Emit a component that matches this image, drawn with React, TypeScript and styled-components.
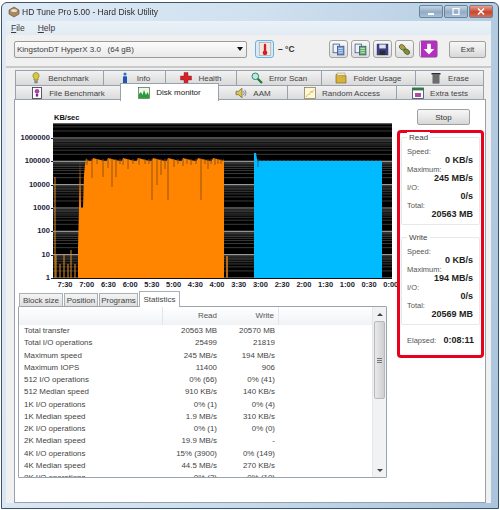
import styled, { createGlobalStyle } from "styled-components";
import type { ReactNode } from "react";

const GlobalStyle = createGlobalStyle`
  html, body { margin: 0; padding: 0; background: #fff; }
  body { font-family: "Liberation Sans", Arial, sans-serif; font-size: 8px; color: #3a3a3a; }
`;

/* ---------- window frame ---------- */
const Page = styled.div`
  width: 500px;
  height: 510px;
  overflow: hidden;
  padding-top: 2px;
  box-sizing: border-box;
`;

const Frame = styled.div`
  width: 498px;
  height: 507px;
  margin-left: 1px;
  box-sizing: border-box;
  border: 1px solid #3f5468;
  border-radius: 6px 6px 0 0;
  background: linear-gradient(100deg, #dfeaf5 0%, #cfe0ef 45%, #a9c4dc 100%);
  padding: 0 7px 5px 4px;
  display: flex;
  flex-direction: column;
  filter: blur(0.3px);
`;

const TitleBar = styled.div`
  height: 18px;
  flex: none;
  display: flex;
  align-items: center;
  gap: 2px;
  padding-left: 2px;
  font-size: 8.5px;
  color: #2c2c2c;
`;

const WinButtons = styled.div`
  margin-left: auto;
  display: flex;
  gap: 1px;
  margin-top: -1px;
  margin-right: -2px;
`;

const WinButton = styled.div<{ $close?: boolean }>`
  width: 22px;
  height: 11px;
  border: 1px solid #6d8297;
  border-radius: 2px;
  display: flex;
  align-items: center;
  justify-content: center;
  color: #fff;
  background: ${(p) =>
    p.$close
      ? "linear-gradient(#e8a08c, #c9452e 55%, #d2705a)"
      : "linear-gradient(#c4d6e6, #91abc4 55%, #a9c1d7)"};
`;

const Client = styled.div`
  flex: 1;
  background: #f0f0f0;
  display: flex;
  flex-direction: column;
  min-height: 0;
`;

const MenuBar = styled.div`
  height: 14px;
  flex: none;
  display: flex;
  gap: 13px;
  padding-left: 5px;
  align-items: center;
  font-size: 8.5px;
  background: linear-gradient(#eaf1f8, #e2ebf3);
  & u { text-decoration: underline; }
`;

const Toolbar = styled.div`
  height: 33px;
  flex: none;
  box-sizing: border-box;
  display: flex;
  align-items: center;
  padding: 0 5px 3px 8px;
  border-bottom: 2px solid #c9c9c9;
  background: #f0f0f0;
`;

const DriveSelect = styled.div`
  width: 233px;
  height: 17px;
  box-sizing: border-box;
  border: 1px solid #9a9a9a;
  border-radius: 2px;
  background: linear-gradient(#fbfbfb, #e9e9e9);
  display: flex;
  align-items: center;
  justify-content: space-between;
  padding: 0 3px 0 2px;
  font-size: 8px;
  margin-right: 8px;
`;

const Caret = styled.span`
  width: 0;
  height: 0;
  border-left: 3px solid transparent;
  border-right: 3px solid transparent;
  border-top: 4px solid #111;
`;

const ToolButton = styled.div<{ $hot?: boolean; $mr?: number }>`
  width: 19px;
  height: 18px;
  box-sizing: border-box;
  border: 1px solid ${(p) => (p.$hot ? "#6fb0d8" : "#a3a3a3")};
  border-radius: 3px;
  background: ${(p) => (p.$hot ? "#d6ecf8" : "linear-gradient(#f8f8f8, #dedede)")};
  display: flex;
  align-items: center;
  justify-content: center;
  margin-right: ${(p) => p.$mr ?? 3}px;
`;

const Temp = styled.span`
  font-size: 8.5px;
  font-weight: bold;
  color: #333;
  margin-left: 4px;
  width: 51px;
  flex: none;
`;

const PushButton = styled.div<{ $w: number }>`
  width: ${(p) => p.$w}px;
  height: 17px;
  box-sizing: border-box;
  border: 1px solid #a0a0a0;
  border-radius: 2px;
  background: linear-gradient(#f6f6f6, #e9e9e9 50%, #d7d7d7);
  display: flex;
  align-items: center;
  justify-content: center;
  font-size: 8px;
  color: #333;
  flex: none;
`;

const StopButton = styled(PushButton)`
  height: 16px;
  margin-left: 6px;
`;

/* ---------- tabs ---------- */
const TabArea = styled.div`
  flex: 1;
  padding: 2px 0 0 8px;
  display: flex;
  flex-direction: column;
`;

const TabRow = styled.div`
  height: 15px;
  display: flex;
  padding-left: 1px;
  flex: none;
`;

const Tab = styled.div<{ $w: number; $active?: boolean }>`
  width: ${(p) => p.$w}px;
  flex: none;
  box-sizing: border-box;
  border: 1px solid #98a2ac;
  border-bottom: none;
  margin-right: -1px;
  display: flex;
  align-items: center;
  justify-content: center;
  gap: 6px;
  font-size: 8px;
  color: #444;
  background: linear-gradient(#f2f2f2, #d9d9d9);
  ${(p) =>
    p.$active &&
    `
    background: #fff;
    height: 18px;
    margin-top: -2px;
    position: relative;
    z-index: 2;
    color: #222;
  `}
`;

const Panel = styled.div`
  width: 472px;
  height: 404px;
  margin-top: -1px;
  box-sizing: border-box;
  border: 1px solid #98a2ac;
  background: #fff;
  padding: 9px 0 0 3px;
  display: grid;
  grid-template-columns: 374px 87px;
  column-gap: 5px;
  align-content: start;
`;

const LeftCol = styled.div`
  display: flex;
  flex-direction: column;
  padding-top: 4px;
`;

const ChartTitle = styled.div`
  height: 10px;
  margin-left: 36px;
  font-size: 7.5px;
  font-weight: bold;
  line-height: 10px;
  color: #111;
`;

const ChartGrid = styled.div`
  display: grid;
  grid-template-columns: 35px 339px;
  grid-template-rows: 156px 12px;
`;

const YAxis = styled.div`
  grid-row: 1 / 3;
  height: 160px;
  padding-top: 10px;
  box-sizing: border-box;
  display: flex;
  flex-direction: column;
  justify-content: space-between;
`;

const YLabel = styled.div`
  height: 10px;
  line-height: 10px;
  font-size: 7.6px;
  font-weight: bold;
  color: #1c1c3a;
  text-align: right;
  padding-right: 3px;
  position: relative;
  &::after {
    content: "";
    position: absolute;
    right: 0;
    top: 5px;
    width: 2px;
    height: 1px;
    background: #222;
  }
`;

const XAxis = styled.div`
  display: flex;
  justify-content: space-between;
  margin: 1px -9px 0 2px;
`;

const XLabel = styled.div`
  width: 20px;
  text-align: center;
  font-size: 7.5px;
  font-weight: bold;
  line-height: 10px;
  color: #1c1c2c;
`;

/* ---------- statistics list ---------- */
const SubTabs = styled.div`
  height: 15px;
  padding-left: 1px;
  display: flex;
  align-items: flex-end;
`;

const SubTab = styled.div<{ $w: number; $active?: boolean }>`
  width: ${(p) => p.$w}px;
  height: ${(p) => (p.$active ? 16 : 13)}px;
  box-sizing: border-box;
  border: 1px solid #a8b0b8;
  border-bottom: none;
  margin-right: ${(p) => (p.$active ? 0 : 1)}px;
  margin-bottom: ${(p) => (p.$active ? -1 : 0)}px;
  display: flex;
  align-items: center;
  justify-content: center;
  font-size: 8px;
  color: #444;
  background: ${(p) => (p.$active ? "#fff" : "linear-gradient(#f4f4f4, #dfdfdf)")};
  position: relative;
  z-index: 1;
  white-space: nowrap;
`;

const ListBox = styled.div`
  width: 369px;
  height: 172px;
  box-sizing: border-box;
  border: 1px solid #9aa4ad;
  border-radius: 1px;
  display: flex;
  overflow: hidden;
`;

const ListBody = styled.div`
  flex: 1;
  min-width: 0;
`;

const ListHead = styled.div`
  height: 18px;
  display: grid;
  grid-template-columns: 144px 54px 62px 1fr;
  background: linear-gradient(#fff, #f0f2f5);
  font-size: 8px;
  line-height: 18px;
  color: #555;
`;

const HeadCell = styled.div<{ $line?: boolean }>`
  text-align: right;
  border-right: ${(p) => (p.$line ? "1px solid #e3e6e9" : "none")};
  padding-right: ${(p) => (p.$line ? 4 : 0)}px;
`;

const HeadSpacer = styled.div`
  border-right: 1px solid #e3e6e9;
`;

const ListRow = styled.div`
  height: 12.25px;
  display: grid;
  grid-template-columns: 198px 58px;
  font-size: 7.9px;
  line-height: 12.25px;
  color: #444;
  white-space: nowrap;
`;

const RowName = styled.div`
  position: relative;
  padding-left: 5px;
  display: flex;
  justify-content: space-between;
`;

const RowValue = styled.div`
  text-align: right;
`;

const ScrollBar = styled.div`
  width: 13px;
  flex: none;
  background: #f1f2f3;
  border-left: 1px solid #e4e6e8;
  display: flex;
  flex-direction: column;
  align-items: center;
`;

const ScrollArrow = styled.div<{ $up?: boolean }>`
  height: 14px;
  flex: none;
  display: flex;
  align-items: center;
  justify-content: center;
  &::before {
    content: "";
    border-left: 3px solid transparent;
    border-right: 3px solid transparent;
    ${(p) => (p.$up ? "border-bottom: 3px solid #444;" : "border-top: 3px solid #444;")}
  }
`;

const ScrollThumb = styled.div`
  width: 11px;
  height: 78px;
  box-sizing: border-box;
  border: 1px solid #b5b9bd;
  border-radius: 2px;
  background: linear-gradient(90deg, #e9e9e9, #cfcfcf);
  display: flex;
  align-items: center;
  justify-content: center;
  flex: none;
`;

const Grip = styled.div`
  width: 5px;
  height: 5px;
  background: repeating-linear-gradient(#777 0 1px, transparent 1px 2px);
`;

const ScrollGap = styled.div`
  flex: 1;
`;

/* ---------- right column ---------- */
const RightCol = styled.div`
  display: flex;
  flex-direction: column;
  align-items: center;
`;

const RedBox = styled.div`
  width: 87px;
  height: 228px;
  margin-top: 5px;
  box-sizing: border-box;
  border: 3px solid #e8001c;
  border-radius: 4px;
  padding: 4px 1px 0 1px;
  display: flex;
  flex-direction: column;
  gap: 12px;
`;

const Group = styled.div`
  height: 88px;
  flex: none;
  box-sizing: border-box;
  border: 1px solid #e6e8ea;
  border-radius: 2px;
  padding: 9px 6px 0 5px;
  position: relative;
`;

const Legend = styled.div`
  position: absolute;
  top: -6px;
  left: 5px;
  padding: 0 2px;
  background: #fff;
  font-size: 8px;
  line-height: 11px;
  color: #444;
`;

const StatLabel = styled.div`
  height: 9px;
  line-height: 9px;
  font-size: 7.5px;
  color: #555;
  white-space: nowrap;
`;

const StatValue = styled.div`
  height: 9px;
  line-height: 9px;
  font-size: 9px;
  font-weight: bold;
  color: #222;
  text-align: right;
  white-space: nowrap;
`;

const Elapsed = styled.div`
  display: flex;
  justify-content: space-between;
  align-items: baseline;
  margin-top: -2px;
  padding: 0 6px 0 6px;
  font-size: 7.5px;
  color: #555;
  & b { color: #222; font-size: 9px; }
`;

/* ---------- icons ---------- */
const Ico = ({ children, size = 12 }: { children: ReactNode; size?: number }) => (
  <svg width={size} height={size} viewBox="0 0 12 12" style={{ flex: "none" }}>
    {children}
  </svg>
);

const BulbIcon = () => (
  <Ico>
    <path d="M6 0.5a3.2 3.2 0 0 1 2 5.6V8H4V6.1A3.2 3.2 0 0 1 6 .5z" fill="#d8c83c" stroke="#6f6a1e" strokeWidth=".6" />
    <rect x="4.3" y="8.3" width="3.4" height="3" fill="#8b8b7a" />
  </Ico>
);
const InfoIcon = () => (
  <Ico>
    <circle cx="6" cy="2" r="1.6" fill="#2f6fd0" />
    <rect x="4" y="4.2" width="4" height="7.4" rx=".6" fill="#1f56b4" />
  </Ico>
);
const CrossIcon = () => (
  <Ico>
    <path d="M4 .5h4v3.5h3.5v4H8v3.5H4V8H.5V4H4z" fill="#d2232a" stroke="#8f1116" strokeWidth=".4" />
  </Ico>
);
const LensIcon = () => (
  <Ico>
    <line x1="6.5" y1="6.5" x2="11" y2="11" stroke="#1f7a34" strokeWidth="2.2" />
    <circle cx="4.3" cy="4.3" r="3.3" fill="#bfe3f0" stroke="#2f8f55" strokeWidth="1" />
  </Ico>
);
const FolderIcon = () => (
  <Ico>
    <path d="M1 2.5h4l1 1.2h5V11H1z" fill="#d8b23a" stroke="#6e5a1c" strokeWidth=".6" />
    <rect x="2" y="1" width="8" height="2.5" fill="#efe6c2" stroke="#8c7c45" strokeWidth=".4" />
  </Ico>
);
const TrashIcon = () => (
  <Ico>
    <rect x="2.6" y="2.8" width="6.8" height="8.7" fill="#4d4d4d" />
    <path d="M4 3v8M6 3v8M8 3v8" stroke="#b5b5b5" strokeWidth=".6" />
    <rect x="1.5" y="1" width="9" height="1.6" fill="#2c2c2c" />
  </Ico>
);
const FileBenchIcon = () => (
  <Ico>
    <rect x="1.5" y=".5" width="9" height="11" fill="#fff" stroke="#333" strokeWidth=".8" />
    <circle cx="6" cy="4.3" r="2.3" fill="#b03bb8" />
    <rect x="4.8" y="6.6" width="2.4" height="3" fill="#7b2a85" />
  </Ico>
);
const MonitorIcon = () => (
  <Ico>
    <rect x=".5" y=".5" width="11" height="11" fill="#eef6ea" stroke="#3a6e3a" strokeWidth=".7" />
    <path d="M1 11V7l2-2 1.5 3L6 3l2 5 1.5-3L11 8v3z" fill="#2f9a3a" />
  </Ico>
);
const SpeakerIcon = () => (
  <Ico>
    <path d="M1 4.3h2.5L7 1.2v9.6L3.5 7.7H1z" fill="#d9c35a" stroke="#5b5320" strokeWidth=".6" />
    <path d="M8.4 4a3 3 0 0 1 0 4M9.8 2.8a5 5 0 0 1 0 6.4" fill="none" stroke="#666" strokeWidth=".7" />
  </Ico>
);
const RandomIcon = () => (
  <Ico>
    <rect x=".5" y=".5" width="11" height="11" fill="#fff8d8" stroke="#7d7450" strokeWidth=".7" />
    <path d="M2 10l2-3 1 1 2-4 1 2 2-4" fill="none" stroke="#d89a28" strokeWidth=".9" strokeDasharray="1 .6" />
  </Ico>
);
const ExtraIcon = () => (
  <Ico>
    <rect x=".5" y="1" width="11" height="10.5" fill="#fff" stroke="#244a70" strokeWidth=".8" />
    <rect x=".5" y="1" width="11" height="2.4" fill="#2f7a3a" />
    <rect x="3" y="6" width="6" height="4" fill="#b04a9a" />
  </Ico>
);
const ThermoIcon = () => (
  <Ico size={14}>
    <rect x="1" y=".5" width="10" height="11" fill="#f4e6e2" stroke="#8a8a8a" strokeWidth=".4" />
    <rect x="5" y="1.5" width="2" height="7" rx="1" fill="#c22" />
    <circle cx="6" cy="9.3" r="2" fill="#c22" />
  </Ico>
);
const CopyIcon = ({ tint }: { tint: string }) => (
  <Ico size={13}>
    <rect x="1" y="1" width="6" height="8" fill="#eef2f8" stroke="#3d4f80" strokeWidth=".7" />
    <rect x="5" y="3" width="6" height="8" fill={tint} stroke="#3d4f80" strokeWidth=".7" />
    <path d="M6 5h4M6 7h4M6 9h4" stroke="#fff" strokeWidth=".6" />
  </Ico>
);
const SaveIcon = () => (
  <Ico size={13}>
    <rect x="1" y="1" width="10" height="10" fill="#3a3f8c" stroke="#20245c" strokeWidth=".5" />
    <rect x="3" y="1.4" width="6" height="3.6" fill="#dfe3f2" />
    <rect x="3.4" y="7" width="5.2" height="4" fill="#2c2c2c" />
  </Ico>
);
const ChainIcon = () => (
  <Ico size={13}>
    <ellipse cx="4" cy="4" rx="3" ry="2.2" fill="#a8a04a" stroke="#5a5a1e" strokeWidth=".7" transform="rotate(40 4 4)" />
    <ellipse cx="8" cy="8" rx="3" ry="2.2" fill="#7d8f3a" stroke="#4a5a1e" strokeWidth=".7" transform="rotate(40 8 8)" />
  </Ico>
);
const DownIcon = () => (
  <Ico size={16}>
    <rect x="0" y="0" width="12" height="12" fill="#b52fc2" />
    <path d="M4.6 2h2.8v4H10L6 10.2 2 6h2.6z" fill="#fff" />
  </Ico>
);
const AppIcon = () => (
  <Ico>
    <path d="M6 1l5 3v4l-5 3-5-3V4z" fill="#a9895f" stroke="#5c4830" strokeWidth=".6" />
    <ellipse cx="6" cy="4.5" rx="3" ry="1.6" fill="#e9dfc9" />
  </Ico>
);

/* ---------- chart ---------- */
const DECADE = 23.33;
const TOP_DECADE_Y = 15;

const gridLines: { y: number; major: boolean }[] = [];
for (let d = -1; d < 6; d++) {
  for (let m = 1; m < 10; m++) {
    const y = TOP_DECADE_Y + (d + 1) * DECADE - Math.log10(m) * DECADE;
    if (y > 0 && y < 156) gridLines.push({ y, major: m === 1 });
  }
}

// x in plot coordinates, y = how deep the dip reaches
const dips: [number, number][] = [
  [39, 55], [50, 54], [55, 45], [59, 64], [63, 54], [99, 77], [104, 62],
  [108, 52], [115, 77], [148, 77], [34, 42], [70, 42], [75, 46], [86, 42],
  [112, 46], [121, 44], [130, 43], [138, 42], [155, 46], [162, 42],
  [44, 41], [67, 41], [80, 41], [92, 41], [96, 41], [125, 41], [134, 41],
  [143, 41], [152, 41], [158, 41], [165, 41], [168, 41],
];

const orangeTop = () => {
  const pts: string[] = ["25,155", "25,125", "26,85", "27,37", "28,85", "30,85", "31,52", "32,42", "33,35"];
  for (let x = 34; x <= 171; x += 1.5) {
    pts.push(`${x},${35 + ((x * 7) % 5) * 0.8}`);
  }
  pts.push("171,35", "171,155");
  return pts.join(" ");
};

const blueTop = () => {
  const pts: string[] = ["201,155", "201,30", "203,30", "204,36"];
  for (let x = 205; x <= 329; x += 2) {
    pts.push(`${x},${37 + ((x * 3) % 4) * 0.5}`);
  }
  pts.push("329,155");
  return pts.join(" ");
};

const preBars: [number, number][] = [
  [2, 54], [3, 131], [7, 141], [11, 131], [15, 141], [18, 127], [22, 141],
];

const ChartPlot = () => (
  <svg width="339" height="156" viewBox="0 0 339 156" style={{ display: "block" }}>
    <rect width="339" height="156" fill="#000" />
    <rect width="339" height="1" fill="#777" />
    {gridLines.map((l) => (
      <line key={l.y} x1="0" x2="339" y1={l.y} y2={l.y} stroke={l.major ? "#9a9a9a" : "#4a4a4a"} strokeWidth={l.major ? 1.2 : 0.8} />
    ))}
    {preBars.map(([x, y]) => (
      <line key={x} x1={x} x2={x} y1={y} y2="155" stroke="#e68a1e" strokeWidth="1" />
    ))}
    <polygon points={orangeTop()} fill="#ff8400" />
    {dips.map(([x, y]) => (
      <line key={x} x1={x} x2={x} y1="36" y2={y} stroke="#8a4f10" strokeWidth="0.9" />
    ))}
    <rect x="173" y="133" width="2" height="22" fill="#b0681a" />
    <polygon points={blueTop()} fill="#00bbff" />
    <line x1="205" x2="205" y1="36" y2="44" stroke="#14506e" strokeWidth=".8" />
    <rect x="0" y="155" width="339" height="1" fill="#111" />
  </svg>
);

/* ---------- data ---------- */
const yLabels = ["1000000", "100000", "10000", "1000", "100", "10", "1"];
const xLabels = ["7:30", "7:00", "6:30", "6:00", "5:30", "5:00", "4:30", "4:00", "3:30", "3:00", "2:30", "2:00", "1:30", "1:00", "0:30", "0:00"];

const rows: [string, string, string][] = [
  ["Total transfer", "20563 MB", "20570 MB"],
  ["Total I/O operations", "25499", "21819"],
  ["Maximum speed", "245 MB/s", "194 MB/s"],
  ["Maximum IOPS", "11400", "906"],
  ["512 I/O operations", "0% (66)", "0% (41)"],
  ["512 Median speed", "910 KB/s", "140 KB/s"],
  ["1K I/O operations", "0% (1)", "0% (4)"],
  ["1K Median speed", "1.9 MB/s", "310 KB/s"],
  ["2K I/O operations", "0% (1)", "0% (0)"],
  ["2K Median speed", "19.9 MB/s", "-"],
  ["4K I/O operations", "15% (3900)", "0% (149)"],
  ["4K Median speed", "44.5 MB/s", "270 KB/s"],
  ["8K I/O operations", "0% (3)", "0% (10)"],
];

const StatBlock = ({ speed, max, io, total }: { speed: string; max: string; io: string; total: string }) => (
  <>
    <StatLabel>Speed:</StatLabel>
    <StatValue>{speed}</StatValue>
    <StatLabel>Maximum:</StatLabel>
    <StatValue>{max}</StatValue>
    <StatLabel>I/O:</StatLabel>
    <StatValue>{io}</StatValue>
    <StatLabel>Total:</StatLabel>
    <StatValue>{total}</StatValue>
  </>
);

export default function App() {
  return (
    <>
      <GlobalStyle />
      <Page>
        <Frame>
          <TitleBar>
            <AppIcon />
            HD Tune Pro 5.00 - Hard Disk Utility
            <WinButtons>
              <WinButton>
                <svg width="8" height="7" viewBox="0 0 8 7"><rect x="1" y="5" width="6" height="2" fill="#fff" /></svg>
              </WinButton>
              <WinButton>
                <svg width="8" height="7" viewBox="0 0 8 7"><rect x="1" y="0.5" width="6" height="6" fill="none" stroke="#fff" strokeWidth="1.2" /></svg>
              </WinButton>
              <WinButton $close>
                <svg width="8" height="7" viewBox="0 0 8 7"><path d="M1 0.5l6 6M7 0.5l-6 6" stroke="#fff" strokeWidth="1.5" /></svg>
              </WinButton>
            </WinButtons>
          </TitleBar>
          <Client>
            <MenuBar>
              <span><u>F</u>ile</span>
              <span><u>H</u>elp</span>
            </MenuBar>
            <Toolbar>
              <DriveSelect>
                KingstonDT HyperX 3.0 &nbsp; (64 gB)
                <Caret />
              </DriveSelect>
              <ToolButton $hot $mr={0}><ThermoIcon /></ToolButton>
              <Temp>– °C</Temp>
              <ToolButton><CopyIcon tint="#6f9ad8" /></ToolButton>
              <ToolButton><CopyIcon tint="#5bb05b" /></ToolButton>
              <ToolButton><SaveIcon /></ToolButton>
              <ToolButton $mr={5}><ChainIcon /></ToolButton>
              <ToolButton $mr={11}><DownIcon /></ToolButton>
              <PushButton $w={37}>Exit</PushButton>
            </Toolbar>
            <TabArea>
              <TabRow>
                <Tab $w={89}><BulbIcon />Benchmark</Tab>
                <Tab $w={63}><InfoIcon />Info</Tab>
                <Tab $w={72}><CrossIcon />Health</Tab>
                <Tab $w={86}><LensIcon />Error Scan</Tab>
                <Tab $w={95}><FolderIcon />Folder Usage</Tab>
                <Tab $w={69}><TrashIcon />Erase</Tab>
              </TabRow>
              <TabRow>
                <Tab $w={106}><FileBenchIcon />File Benchmark</Tab>
                <Tab $w={99} $active><MonitorIcon />Disk monitor</Tab>
                <Tab $w={70}><SpeakerIcon />AAM</Tab>
                <Tab $w={110}><RandomIcon />Random Access</Tab>
                <Tab $w={88}><ExtraIcon />Extra tests</Tab>
              </TabRow>
              <Panel>
                <LeftCol>
                  <ChartTitle>KB/sec</ChartTitle>
                  <ChartGrid>
                    <YAxis>
                      {yLabels.map((l) => <YLabel key={l}>{l}</YLabel>)}
                    </YAxis>
                    <ChartPlot />
                    <XAxis>
                      {xLabels.map((l) => <XLabel key={l}>{l}</XLabel>)}
                    </XAxis>
                  </ChartGrid>
                  <SubTabs>
                    <SubTab $w={44}>Block size</SubTab>
                    <SubTab $w={34}>Position</SubTab>
                    <SubTab $w={39}>Programs</SubTab>
                    <SubTab $w={41} $active>Statistics</SubTab>
                  </SubTabs>
                  <ListBox>
                    <ListBody>
                      <ListHead>
                        <HeadSpacer />
                        <HeadCell>Read</HeadCell>
                        <HeadCell $line>Write</HeadCell>
                      </ListHead>
                      {rows.map(([name, read, write]) => (
                        <ListRow key={name}>
                          <RowName>
                            {name}
                            <RowValue>{read}</RowValue>
                          </RowName>
                          <RowValue>{write}</RowValue>
                        </ListRow>
                      ))}
                    </ListBody>
                    <ScrollBar>
                      <ScrollArrow $up />
                      <ScrollThumb><Grip /></ScrollThumb>
                      <ScrollGap />
                      <ScrollArrow />
                    </ScrollBar>
                  </ListBox>
                </LeftCol>
                <RightCol>
                  <StopButton $w={53}>Stop</StopButton>
                  <RedBox>
                    <Group>
                      <Legend>Read</Legend>
                      <StatBlock speed="0 KB/s" max="245 MB/s" io="0/s" total="20563 MB" />
                    </Group>
                    <Group>
                      <Legend>Write</Legend>
                      <StatBlock speed="0 KB/s" max="194 MB/s" io="0/s" total="20569 MB" />
                    </Group>
                    <Elapsed>Elapsed: <b>0:08:11</b></Elapsed>
                  </RedBox>
                </RightCol>
              </Panel>
            </TabArea>
          </Client>
        </Frame>
      </Page>
    </>
  );
}
